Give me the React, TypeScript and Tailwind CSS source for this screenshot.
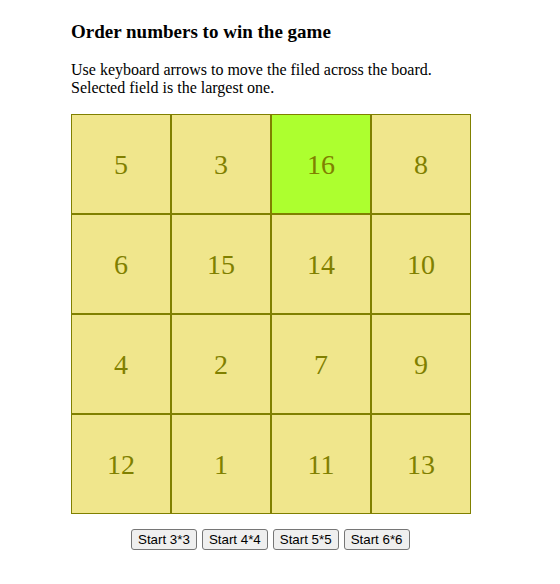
import React from "react";

const board = [
  [5, 3, 16, 8],
  [6, 15, 14, 10],
  [4, 2, 7, 9],
  [12, 1, 11, 13],
];

export default function App() {
  return (
    <div className="min-h-[584px] w-[560px] bg-white text-black" style={{ fontFamily: '"Liberation Serif", "Times New Roman", serif' }}>
      <div className="pl-[71px] pt-[21px] w-[471px]">
        <h3 className="text-[19px] font-bold leading-[22px] m-0">Order numbers to win the game</h3>
        <p className="text-[16px] leading-[18px] mt-[18px] mb-[17px]">
          Use keyboard arrows to move the filed across the board.
          <br />
          Selected field is the largest one.
        </p>
        <div className="grid grid-cols-4 w-[400px]">
          {board.flat().map((n, i) => (
            <div
              key={i}
              className={`h-[100px] w-[100px] pt-[2px] border border-[#808000] flex items-center justify-center text-[28px] text-[#808000] ${
                n === 16 ? "bg-[#adff2f]" : "bg-[#f0e68c]"
              }`}
            >
              {n}
            </div>
          ))}
        </div>
        <div className="flex gap-[5px] mt-[15px] pl-[60px] w-[400px]">
          {["Start 3*3", "Start 4*4", "Start 5*5", "Start 6*6"].map((t) => (
            <button
              key={t}
              className="h-[21px] px-[6px] bg-[#efefef] border border-[#767676] rounded-[3px] text-[13.33px] leading-[15px] text-black"
              style={{ fontFamily: '"Liberation Sans", Arial, sans-serif' }}
            >
              {t}
            </button>
          ))}
        </div>
      </div>
    </div>
  );
}
